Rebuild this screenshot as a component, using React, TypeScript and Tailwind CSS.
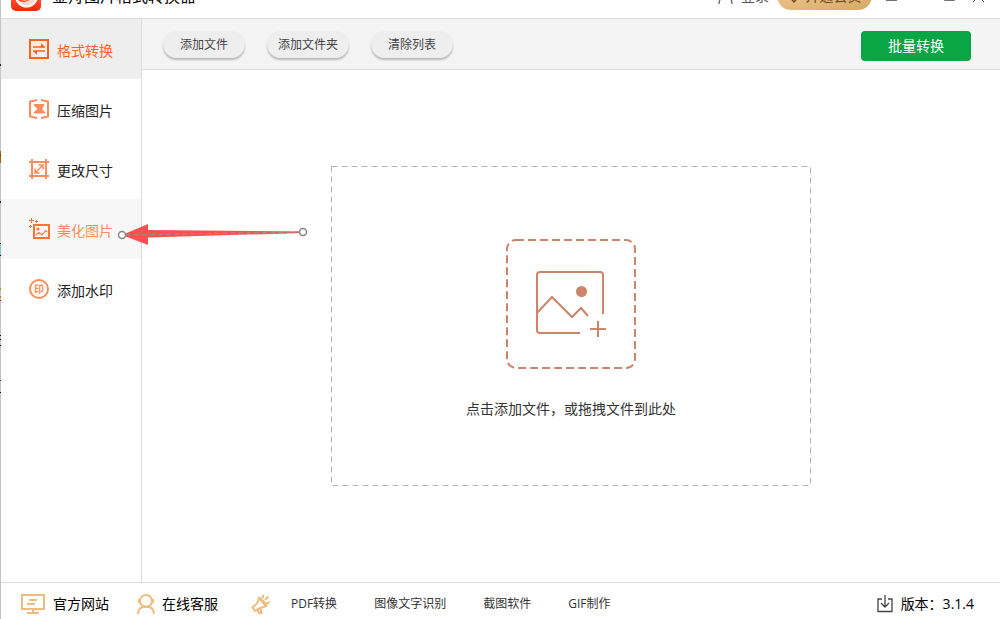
import { useState } from 'react';
import type { ReactNode } from 'react';

type NavItem = {
  k: string;
  label: string;
  icon: ReactNode;
};

const NAV_ITEMS: NavItem[] = [
  { k: 'convert', label: '格式转换', icon: <ConvertIcon /> },
  { k: 'compress', label: '压缩图片', icon: <CompressIcon /> },
  { k: 'resize', label: '更改尺寸', icon: <ResizeIcon /> },
  { k: 'beautify', label: '美化图片', icon: <BeautifyIcon /> },
  { k: 'watermark', label: '添加水印', icon: <WatermarkIcon /> },
];

const FILE_ACTIONS = ['添加文件', '添加文件夹', '清除列表'];

// Colours of whatever window shows through along the left edge
const EDGE_MARKS = [
  { y: 64, h: 2, c: '#5a0f22' },
  { y: 151, h: 12, c: '#a8610c' },
  { y: 155, h: 1, c: '#222222' },
  { y: 201, h: 2, c: '#5a0f22' },
  { y: 243, h: 12, c: '#7fc4c8' },
  { y: 243, h: 1, c: '#111111' },
  { y: 255, h: 1, c: '#111111' },
  { y: 288, h: 2, c: '#b98a2e' },
  { y: 296, h: 2, c: '#c8731a' },
  { y: 300, h: 1, c: '#7a2b12' },
  { y: 335, h: 1, c: '#111111' },
  { y: 339, h: 1, c: '#111111' },
  { y: 345, h: 1, c: '#111111' },
  { y: 380, h: 1, c: '#1d2f8a' },
  { y: 392, h: 1, c: '#111111' },
];

function ConvertIcon() {
  return (
    <svg width="20" height="20" viewBox="0 0 20 20" fill="none" stroke="#fa6422">
      <rect x="1" y="1" width="18" height="18" strokeWidth="2" />
      <path d="M4 8H16M16 12H4" strokeWidth="1.6" />
      <path d="M12 4L16 8H12ZM8 16L4 12H8Z" fill="#fa6422" stroke="none" />
    </svg>
  );
}

function CompressIcon() {
  return (
    <svg width="20" height="20" viewBox="0 0 20 20" fill="none" stroke="#ff8c5a" strokeWidth="2">
      <path d="M8 1L1 2.5V17.5L8 19M12 1L19 2.5V17.5L12 19" />
      <path d="M5 5H15V6.5L13 10L16 13V14.500H5V13L8.500 10L5 6.500Z" fill="#ff8c5a" stroke="none" />
    </svg>
  );
}

function ResizeIcon() {
  return (
    <svg width="20" height="20" viewBox="0 0 20 20" fill="none" stroke="#ff8c5a">
      <path d="M3 0V20M17 0V20M0 3H20M0 17H20" strokeWidth="2" />
      <path d="M6.5 13.5L13.5 6.5M9.500 6H14V10.500M6 9.500V14H10.500" strokeWidth="1.500" />
    </svg>
  );
}

function BeautifyIcon() {
  return (
    <svg width="22" height="22" viewBox="0 0 22 22" fill="none" stroke="#fa7438">
      <path d="M2.5 0V5M0 2.5H5M7.5 2V5M6 3.5H9M1.5 7V10M0 8.5H3" strokeWidth="1" />
      <rect x="5" y="7" width="15" height="13" strokeWidth="2" />
      <circle cx="9" cy="11" r="1.5" fill="#fa7438" stroke="none" />
      <path d="M7 17L10 14.5L13 17L16.5 12.5L18 14" strokeWidth="1.1" />
    </svg>
  );
}

function WatermarkIcon() {
  return (
    <span className="flex size-5 items-center justify-center rounded-full border-2 border-[#ff8c5a] text-[10px] leading-4 font-bold text-[#ff8c5a]">
      印
    </span>
  );
}

function LogoIcon() {
  return (
    <svg width="30" height="30" viewBox="0 0 30 30" fill="none">
      <defs>
        <linearGradient id="logo-bg" x1="0" y1="0" x2="0" y2="1">
          <stop offset="0.500" stopColor="#ff5a2c" />
          <stop offset="1" stopColor="#f5240f" />
        </linearGradient>
      </defs>
      <rect width="30" height="30" rx="5" fill="url(#logo-bg)" />
      <circle cx="15.500" cy="15" r="10.500" fill="#ffd9cc" stroke="#ffffff" strokeWidth="2" />
      <path d="M7 19C12 23 20 21 23 12V8H7Z" fill="#f5421f" />
      <path d="M10 17.500C14 20 18 18 20 13" stroke="#ffffff" strokeWidth="2" />
    </svg>
  );
}

function PictureIcon() {
  return (
    <svg width="130" height="130" viewBox="0 0 130 130" fill="none" stroke="#cb856b" strokeWidth="2">
      <rect x="1" y="1" width="128" height="128" rx="9" strokeDasharray="8 4" />
      <path d="M74 94H34Q31 94 31 91V36Q31 33 34 33H94Q97 33 97 36V75" />
      <path d="M31 74L46 58L66 78L75 69L82 77" />
      <circle cx="75.500" cy="52.500" r="5.500" fill="#cb856b" stroke="none" />
      <path d="M92 82V98M84 90H100" />
    </svg>
  );
}

function MonitorIcon() {
  return (
    <svg width="24" height="20" viewBox="0 0 24 20" fill="none" stroke="#edbd80" strokeWidth="2">
      <path d="M1 1H23V15H1ZM12 15V19M6 19H18" />
      <path d="M8 6H16M6 10H14" />
    </svg>
  );
}

function SupportIcon() {
  return (
    <svg width="20" height="20" viewBox="0 0 20 20" fill="none" stroke="#edbd80" strokeWidth="2">
      <circle cx="10" cy="7" r="6" />
      <path d="M3 5V9M17 5V9" />
      <path d="M2 20C2 15 5 12.500 10 12.500S18 15 18 20" />
    </svg>
  );
}

function MegaphoneIcon() {
  return (
    <svg width="20" height="20" viewBox="0 0 20 20" fill="none" stroke="#edbd80" strokeWidth="2">
      <path d="M8 4L15 12L7 15L4 17L1.500 13.500L6 9.500Z" />
      <path d="M6 15.500L8 19H10.500L9 14" />
      <path d="M9 3.500L16 11.500M12 4V1M14 6L17.500 2.500M15.500 9L19 8.500" />
    </svg>
  );
}

function DownloadIcon() {
  return (
    <svg width="16" height="18" viewBox="0 0 16 18" fill="none" stroke="#444444" strokeWidth="1.300">
      <path d="M5 4H1V16.500H15V4H11" />
      <path d="M8 0V12M4 8L8 12L12 8" />
    </svg>
  );
}

function TitleBar() {
  return (
    <header className="flex h-[19px] items-end overflow-hidden border-b border-[#dcdcdc]">
      <div className="flex h-11 flex-1 shrink-0 items-center pr-4 pl-[10px]">
        <LogoIcon />
        <h1 className="ml-[11px] flex-1 text-base leading-6 text-black">金舟图片格式转换器</h1>
        <button className="flex items-center gap-2 text-sm leading-5 text-[#555]">
          <svg width="15" height="15" viewBox="0 0 15 15" fill="none" stroke="#666666" strokeWidth="1.300">
            <circle cx="7.500" cy="4" r="3.500" />
            <path d="M1 15C1 11 3 8 7.500 8S14 11 14 15" />
          </svg>
          登录
        </button>
        <button className="ml-2 flex h-7 w-[95px] items-center justify-center gap-1.5 rounded-full bg-linear-to-br from-[#f5cb97] to-[#d5a963] text-sm leading-5 text-[#6f4a1c]">
          <svg width="12" height="14" viewBox="0 0 12 14" fill="none" stroke="#6f4a1c" strokeWidth="1.500">
            <path d="M3 2H9L11 7L6 13L1 7Z" />
          </svg>
          开通会员
        </button>
        <div className="ml-[14px] flex items-center gap-[18px] text-[#444]">
          <button aria-label="菜单">
            <svg className="block" width="11" height="10" viewBox="0 0 11 10" stroke="currentColor" strokeWidth="1.500">
              <path d="M0 1H11M0 5H11M0 9H11" />
            </svg>
          </button>
          <button aria-label="最小化">
            <svg className="block" width="11" height="10" viewBox="0 0 11 10" stroke="currentColor">
              <path d="M0 5.500H11" />
            </svg>
          </button>
          <button aria-label="最大化">
            <svg className="block" width="11" height="10" viewBox="0 0 11 10" fill="none" stroke="currentColor" strokeWidth="1.500">
              <path d="M1 1H10V9H1Z" />
            </svg>
          </button>
          <button aria-label="关闭">
            <svg className="block" width="11" height="11" viewBox="0 0 11 11" stroke="currentColor">
              <path d="M0 0L11 11M11 0L0 11" />
            </svg>
          </button>
        </div>
      </div>
    </header>
  );
}

function Sidebar({ active, onSelect }: { active: string; onSelect: (k: string) => void }) {
  const tone = (k: string): string => {
    if (k === active) return 'bg-[#eeeeee] text-[#fa6422]';
    if (k === 'beautify') return 'bg-[#f7f7f7] text-[#ff8c5a]';
    return 'text-[#222] hover:bg-[#f7f7f7]';
  };

  return (
    <nav className="relative w-[141px] shrink-0 border-r border-[#dcdcdc]">
      {NAV_ITEMS.map((item) => (
        <button
          key={item.k}
          onClick={() => onSelect(item.k)}
          className={`flex h-[60px] w-full items-center pl-7 text-sm leading-5 ${tone(item.k)}`}
        >
          <span className="w-[28px] shrink-0">{item.icon}</span>
          <span className="pt-1">{item.label}</span>
        </button>
      ))}

      {/* Arrow pointing at the beautify entry */}
      <svg className="pointer-events-none absolute top-[203px] left-[116px]" width="192" height="26" viewBox="0 0 192 26" fill="none">
        <path d="M5 13L31 2V8L186 9.500V11L31 15.500V23Z" fill="#fb5050" />
        <path d="M9 13L182 10" stroke="#969696" strokeDasharray="5 3" />
        <circle cx="5" cy="13" r="3.500" fill="#ffffff" stroke="#858585" strokeWidth="1.500" />
        <circle cx="186" cy="10" r="3.500" fill="#ffffff" stroke="#858585" strokeWidth="1.500" />
      </svg>
    </nav>
  );
}

function Toolbar() {
  return (
    <div className="flex h-[51px] items-start border-b border-[#dcdcdc] bg-[#f4f4f4] pt-3 pr-[29px] pl-[21px]">
      <div className="flex flex-1 gap-[22px]">
        {FILE_ACTIONS.map((label) => (
          <button
            key={label}
            className="h-[27px] w-[82px] rounded-full bg-[#eeeeee] text-xs leading-4 text-[#444] shadow-[0_2px_2px_rgba(0,0,0,0.25)]"
          >
            {label}
          </button>
        ))}
      </div>
      <button className="h-[30px] w-[110px] rounded bg-[#0aa545] text-sm leading-5 text-white">批量转换</button>
    </div>
  );
}

function DropZone() {
  return (
    <div className="flex flex-1 items-center justify-center">
      <button className="relative flex h-80 w-[480px] flex-col items-center pt-[73px]">
        <svg className="absolute inset-0 h-full w-full" fill="none" stroke="#b4b4b4">
          <rect x="0.500" y="0.500" width="479" height="319" strokeDasharray="6 4" />
        </svg>
        <PictureIcon />
        <span className="mt-[30px] text-sm leading-5 text-[#333]">点击添加文件，或拖拽文件到此处</span>
      </button>
    </div>
  );
}

function Footer() {
  return (
    <footer className="flex h-[37px] items-center border-t border-[#dcdcdc] pt-1.5 pr-[26px] pl-5 text-sm leading-5 text-black">
      <a href="#site" className="flex items-center gap-2">
        <MonitorIcon />
        官方网站
      </a>
      <a href="#support" className="ml-[27px] flex items-center gap-1.5">
        <SupportIcon />
        在线客服
      </a>
      <div className="ml-[33px] flex flex-1 items-center text-xs leading-4 text-[#333]">
        <MegaphoneIcon />
        <div className="ml-5 flex gap-[37px]">
          <a href="#pdf">PDF转换</a>
          <a href="#ocr">图像文字识别</a>
          <a href="#capture">截图软件</a>
          <a href="#gif">GIF制作</a>
        </div>
      </div>
      <span className="flex items-center gap-2">
        <DownloadIcon />
        版本：3.1.4
      </span>
    </footer>
  );
}

export default function App() {
  const [active, setActive] = useState('convert');

  return (
    <div className="relative flex min-h-screen flex-col border-l border-[#c4c4c4] bg-white font-['Open_Sans','Noto_Sans_CJK_SC',sans-serif]">
      <TitleBar />
      <div className="flex flex-1">
        <Sidebar active={active} onSelect={setActive} />
        <main className="flex flex-1 flex-col">
          <Toolbar />
          <DropZone />
        </main>
      </div>
      <Footer />
      <svg className="pointer-events-none absolute top-0 -left-px h-full w-px">
        {EDGE_MARKS.map((m) => (
          <rect key={`${m.y}-${m.c}`} y={m.y} width="1" height={m.h} fill={m.c} />
        ))}
      </svg>
    </div>
  );
}
